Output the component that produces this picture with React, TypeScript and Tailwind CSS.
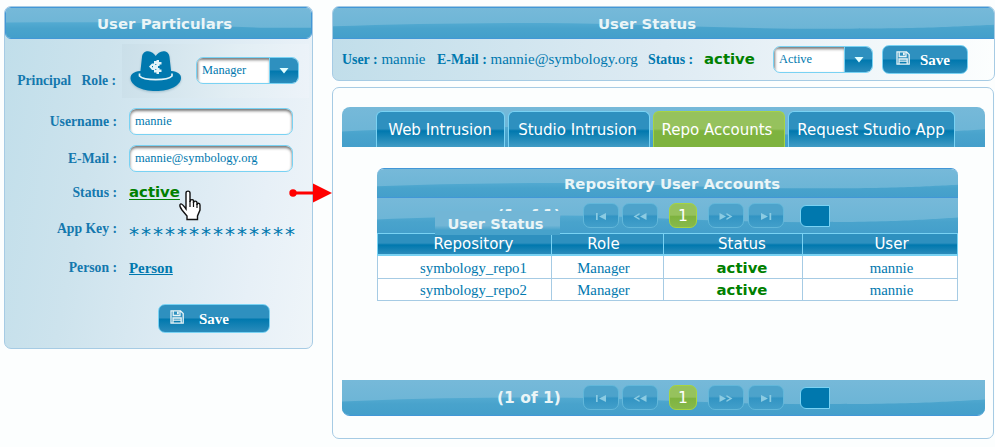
import type { ReactNode } from "react";

const serif = "font-['Liberation_Serif',serif]";
const sans = "font-['DejaVu_Sans',sans-serif]";
const glossy = "bg-[linear-gradient(#2e90bf_0%,#2e90bf_48%,#0078ae_52%,#2b8cbb_100%)]";
const light = "bg-[linear-gradient(100deg,#c0deea_0%,#cde3ed_30%,#e7f0f7_80%,#eff5f9_100%)]";

function Wave({ flat = false }: { flat?: boolean }) {
  return (
    <svg className="absolute inset-0 -z-10 h-full w-full" viewBox="0 0 100 34" preserveAspectRatio="none">
      <defs>
        <linearGradient id="top" gradientUnits="userSpaceOnUse" x1="0" y1="0" x2="0" y2="24">
          <stop offset="0" stopColor="#76b9d9" />
          <stop offset="1" stopColor="#6cb5d6" />
        </linearGradient>
        <linearGradient id="low" gradientUnits="userSpaceOnUse" x1="0" y1="16" x2="0" y2="34">
          <stop offset="0" stopColor="#54abd2" />
          <stop offset="0.4" stopColor="#49a3cc" />
          <stop offset="1" stopColor="#449fcb" />
        </linearGradient>
      </defs>
      <rect width="100" height="34" fill="url(#top)" />
      <path
        d={flat ? "M0 16.5 C20 16 40 15.5 60 19 S85 22.5 100 22.5 V34 H0Z" : "M0 20.8 C10 18.5 20 16.8 32 17 S58 23.5 74 23.5 S94 21 100 19 V34 H0Z"}
        fill="url(#low)"
      />
    </svg>
  );
}

function Bar({ className, children, flat }: { className: string; children?: ReactNode; flat?: boolean }) {
  return (
    <div className={`relative isolate flex shrink-0 overflow-hidden ${className}`}>
      <Wave flat={flat} />
      {children}
    </div>
  );
}

function Title({ children, className = "text-[14.9px]" }: { children: ReactNode; className?: string }) {
  return <span className={`${sans} leading-5 font-bold whitespace-pre text-[#eaf5f7] ${className}`}>{children}</span>;
}

function Floppy() {
  return (
    <svg width="14" height="14" viewBox="0 0 14 14" fill="none" stroke="#eaf5f7" strokeWidth="1.3">
      <path d="M1 .8H10.5L13.2 3.5V13.2H1ZM3.2 1V5.5H10V1M3 13V8H11.2V13M3.2 10.2H11" />
      <path d="M7.9 1.5V4.3" strokeWidth="1.8" />
    </svg>
  );
}

function SaveButton({ className, gap }: { className: string; gap: string }) {
  return (
    <button className={`flex shrink-0 rounded-[7px] border border-[#79d2f3] ${glossy} ${gap} ${className}`}>
      <span className="mt-[5px]"><Floppy /></span>
      <span className={`${serif} mt-[4px] text-[15px] leading-5 font-bold text-white`}>Save</span>
    </button>
  );
}

function Select({ value, className, arrow }: { value: string; className: string; arrow: string }) {
  return (
    <div className={`flex h-[27px] shrink-0 overflow-hidden rounded-[7px] border border-[#79d2f3] bg-white ${className}`}>
      <div className={`${serif} flex-1 pt-[4px] pl-[5px] text-[12.4px] leading-4 text-[#0078ae] shadow-[inset_1px_2px_3px_#777]`}>{value}</div>
      <div className={`flex items-center justify-center border-l border-[#79d2f3] ${glossy} ${arrow}`}>
        <svg width="10" height="6" viewBox="0 0 10 6"><path d="M.5 0H9.5L5 5.5Z" fill="#e0fdff" /></svg>
      </div>
    </div>
  );
}

function Field({ value }: { value: string }) {
  return (
    <div className={`${serif} h-[27px] w-[164px] rounded-[7px] border border-[#79d2f3] bg-white pt-[4px] pl-[5px] text-[12.5px] leading-4 text-[#0078ae] shadow-[inset_0_2px_3px_#777]`}>
      {value}
    </div>
  );
}

function Row({ label, className, children }: { label: string; className: string; children: ReactNode }) {
  return (
    <div className={`flex items-center ${className}`}>
      <div className={`${serif} w-[112px] shrink-0 text-right text-[13.7px] leading-4 font-bold whitespace-pre text-[#1478ae]`}>{label}</div>
      <div className="ml-[12px]">{children}</div>
    </div>
  );
}

function Hat() {
  return (
    <svg width="52" height="41" viewBox="0 0 52 41" className="drop-shadow-[0_1px_1px_#9bbccb]">
      <path d="M10 20C4 20.5 .5 23 .5 27C.5 34 11 40 25.7 40S51 34 51 27C51 23 47.5 20.5 41.5 20Z" fill="#0078ae" />
      <path d="M10 24L12 6C12.5 2 15 .3 18 .3C21.5 .3 24 2.5 25.7 5C27.4 2.5 30 .3 33.4 .3C36.5 .3 39 2 39.5 6L41.5 24C38 28.5 14 28.5 10 24Z" fill="#0078ae" />
      <path d="M9.5 22.500V25C14 29.8 37.5 29.8 42 25V22.5" fill="none" stroke="#e2f3f8" strokeWidth="1.7" />
      <path d="M19 15.5L22 12.5H24V10H26.5V9H29V11H31.5V13.5H29.5V15H28V17H29.5V18.5H31.5V21H29V23H26.5V21.5H24V19H22Z" fill="#e2f3f8" />
      <path d="M22 15H23V16.200H22ZM25.300 13H26.300V14H25.300ZM25.300 18H26.300V19H25.300Z" fill="#0078ae" />
    </svg>
  );
}

function PageButton({ kind }: { kind: "first" | "prev" | "next" | "last" }) {
  const shapes = {
    first: "M1 1H2.7V8H1ZM11 1V8L4 4.5Z",
    prev: "M13 1V8L6.5 4.5ZM6 1V2.7L2.7 4.5L6 6.3V8L0 4.5Z",
    next: "M0 1V8L6.5 4.5ZM7 1V2.7L10.3 4.5L7 6.3V8L13 4.5Z",
    last: "M1 1V8L8 4.5ZM9.5 1H11.2V8H9.5Z",
  };
  return (
    <button className="flex h-[25px] w-[36px] items-center justify-center rounded-[7px] border border-[#62b7da] bg-[linear-gradient(#4da3cb_45%,#3294c3_53%,#429fca)] pt-[2px]">
      <svg width={kind === "first" || kind === "last" ? 12 : 14} height="9" viewBox={kind === "first" || kind === "last" ? "0 0 12 9" : "0 0 13 9"}>
        <path d={shapes[kind]} fill="#8bcbe2" />
      </svg>
    </button>
  );
}

function Pager({ pad, top }: { pad: string; top: string }) {
  return (
    <div className={`flex items-start ${pad} ${top}`}>
      <Title className="mt-[3px] w-[86px] text-[15.5px]">(1 of 1)</Title>
      <PageButton kind="first" />
      <div className="ml-[3px]"><PageButton kind="prev" /></div>
      <div className={`${sans} ml-[11px] flex h-[25px] w-[28px] items-center justify-center rounded-[7px] border border-[#a6d442] bg-[linear-gradient(#96c25d_48%,#7eb33f_54%,#87b94b)] text-[15.5px] leading-5 text-white`}>1</div>
      <div className="ml-[11px]"><PageButton kind="next" /></div>
      <div className="ml-[4px]"><PageButton kind="last" /></div>
      <div className="mt-[2px] ml-[16px] h-[22px] w-[30px] rounded-l-[6px] border border-[#79d2f3] bg-[#0078ae]" />
    </div>
  );
}

function Tab({ children, className }: { children: string; className: string }) {
  return <div className={`${sans} mt-[4px] h-[36px] rounded-t-[6px] border border-b-0 pt-[8px] text-center text-[15px] leading-5 whitespace-nowrap text-white ${className}`}>{children}</div>;
}

const cols = "grid grid-cols-[174px_112px_139px_155px]";

export default function App() {
  const tabBlue = "border-[#79d2f3] bg-[linear-gradient(#2e90bf_0%,#2e90bf_48%,#0078ae_54%,#419cc5_100%)]";
  return (
    <div className="relative flex h-[447px] w-[995px] overflow-hidden bg-[#fcfefe] pt-[6px] pl-[4px]">
      <section className={`flex h-[343px] w-[309px] shrink-0 flex-col overflow-hidden rounded-[7px] border border-[#a6cbe4] ${light}`}>
        <Bar flat className="h-[32px] justify-center rounded-[6px] border border-[#4297d7]"><Title className="mt-[6px] ml-[12px] text-[14.9px] tracking-[0.04px]">User Particulars</Title></Bar>
        <div className="flex h-[64px]">
          <div className={`${serif} mt-[34px] w-[111px] text-right text-[13.7px] leading-4 font-bold whitespace-pre text-[#1478ae]`}>Principal   Role :</div>
          <div className="mt-[5px] ml-[6px] flex h-[54px] w-[187px] bg-[linear-gradient(100deg,#cadfe9,#e2eef4_60%,#edf3f9)]">
            <div className="mt-[7px] ml-[8px]"><Hat /></div>
            <Select value="Manager" className="mt-[13px] ml-[14px] w-[103px]" arrow="w-[29px]" />
          </div>
        </div>
        <Row label="Username :" className="h-[37px]"><Field value="mannie" /></Row>
        <Row label="E-Mail :" className="h-[37px]"><Field value="mannie@symbology.org" /></Row>
        <Row label="Status :" className="h-[31px]"><a className={`${sans} relative -top-px text-[14.9px] font-bold text-[#008000] underline underline-offset-2`}>active</a></Row>
        <Row label="App Key :" className="h-[42px]"><div className={`${sans} relative top-[5px] text-[20px] leading-5 tracking-[2px] text-[#0078ae]`}>**************</div></Row>
        <Row label="Person :" className="h-[36px]"><a className={`${serif} relative -top-px text-[14.9px] font-bold text-[#0078ae] underline`}>Person</a></Row>
        <SaveButton className="mt-[18px] ml-[153px] h-[29px] w-[112px] pl-[11px]" gap="gap-[15px]" />
      </section>

      <main className="ml-[19px] flex w-[663px] shrink-0 flex-col">
        <section className="h-[75px] shrink-0 overflow-hidden rounded-[7px] border border-[#a6cbe4] bg-[linear-gradient(90deg,#c1deea,#deebf3_50%,#fcfefe)]">
          <Bar className="h-[32px] justify-center border-y border-[#4297d7]"><Title className="mt-[6px] mr-[33px] text-[14.9px]">User Status</Title></Bar>
          <div className={`${serif} flex h-[41px] items-start pl-[9px] text-[15px] leading-5 whitespace-pre text-[#0078ae] [&_b]:text-[13.9px]`}>
            <div className="mt-[10px] w-[95px]"><b>User :</b> mannie</div>
            <div className="mt-[10px] w-[211px]"><b>E-Mail :</b> mannie@symbology.org</div>
            <div className="mt-[10px] w-[56px]"><b>Status :</b></div>
            <span className={`${sans} mt-[10px] w-[69px] text-[14.9px] font-bold text-[#008000]`}>active</span>
            <Select value="Active" className="mt-[7px] w-[100px]" arrow="w-[28px]" />
            <SaveButton className="mt-[6px] ml-[9px] h-[29px] w-[86px] pl-[13px]" gap="gap-[10px]" />
          </div>
        </section>

        <section className="mt-[6px] flex h-[352px] w-[662px] shrink-0 flex-col rounded-[7px] border border-[#a6cbe4] pt-[19px] pl-[9px]">
          <Bar className="h-[40px] w-[643px] rounded-t-[8px] pl-[34px]">
            <Tab className={`w-[129px] pr-[1px] ${tabBlue}`}>Web Intrusion</Tab>
            <Tab className={`ml-[3px] w-[142px] pr-[3px] ${tabBlue}`}>Studio Intrusion</Tab>
            <Tab className="ml-[3px] w-[132px] border-[#a6d442] bg-[linear-gradient(#96c25d_48%,#7eb33f_54%,#7eb33f)] pr-[4px]">Repo Accounts</Tab>
            <Tab className={`ml-[3px] w-[167px] pr-[1px] ${tabBlue}`}>Request Studio App</Tab>
          </Bar>

          <div className="relative mt-[21px] ml-[35px] w-[581px]">
            <Bar className="h-[30px] justify-center rounded-t-[7px] border-y border-[#4297d7]"><Title className="mt-[5px] ml-[9px] text-[14.9px]">Repository User Accounts</Title></Bar>
            <Bar className="h-[35px]"><Pager pad="pl-[120px]" top="pt-[5px]" /></Bar>
            <div className="absolute top-[43px] left-[58px] h-[24px] w-[125px] bg-[linear-gradient(#72b6d6_60%,#47a2cb_80%)] pr-[4px] text-center"><Title className="relative top-0 text-[14.6px]">User Status</Title></div>
            <div className={`${cols} ${sans} h-[23px] divide-x divide-[#79d2f3] border border-b-2 border-[#79d2f3] bg-[linear-gradient(#2e90bf_45%,#0078ae_55%,#2b8cbb)] text-center text-[15px] leading-[21px] text-white`}>
              {["Repository", "Role", "Status", "User"].map((h) => <div key={h} className={h === "User" ? "pl-[22px]" : h === "Status" ? "pl-[18px]" : h === "Repository" ? "pl-[18px]" : "pr-[8px]"}>{h}</div>)}
            </div>
            {["symbology_repo1", "symbology_repo2"].map((r, i) => (
              <div key={r} className={`${cols} ${serif} ${i === 0 ? "h-[23px] leading-[25px]" : "h-[22px] leading-[23px]"} divide-x divide-[#a6cbe4] border border-t-0 border-[#a6cbe4] bg-white text-center text-[14.8px] text-[#0078ae]`}>
                <div className="h-full overflow-hidden pl-[18px]">{r}</div>
                <div className="h-full overflow-hidden pr-[8px]">Manager</div>
                <div className={`${sans} h-full overflow-hidden pl-[18px] text-[14.9px] font-bold text-[#008000] ${i === 0 ? "leading-[24px]" : "leading-[23px]"}`}>active</div>
                <div className="h-full overflow-hidden pl-[22px]">mannie</div>
              </div>
            ))}
          </div>

          <Bar className="mt-[79px] h-[36px] w-[643px] rounded-b-[8px] border-b border-[#4297d7]"><Pager pad="pl-[155px]" top="pt-[5px]" /></Bar>
        </section>
      </main>

      <svg className="absolute top-[183px] left-[289px]" width="44" height="20" viewBox="0 0 44 20">
        <path d="M4 10H25" stroke="red" strokeWidth="3" />
        <circle cx="4" cy="10" r="3.7" fill="red" />
        <path d="M24 .5L43 10L24 19.5Z" fill="red" />
      </svg>
      <svg className="absolute top-[190px] left-[178px]" width="24" height="31" viewBox="0 0 24 31">
        <path d="M8 19V3C8 .5 12 .5 12 3V12C12 9 15.5 9 15.5 11V13C15.5 10.5 19 10.5 19 13V15C19 12.5 22 13 22 15V20L19.5 26V29.5H9V26L4 20C2 17 1 15 2.5 14S5 15 8 19Z" fill="white" stroke="#111" strokeWidth="1.4" />
        <path d="M12 11V17M15.5 12V17M19 14V18" stroke="#111" strokeWidth="1.2" />
      </svg>
    </div>
  );
}
